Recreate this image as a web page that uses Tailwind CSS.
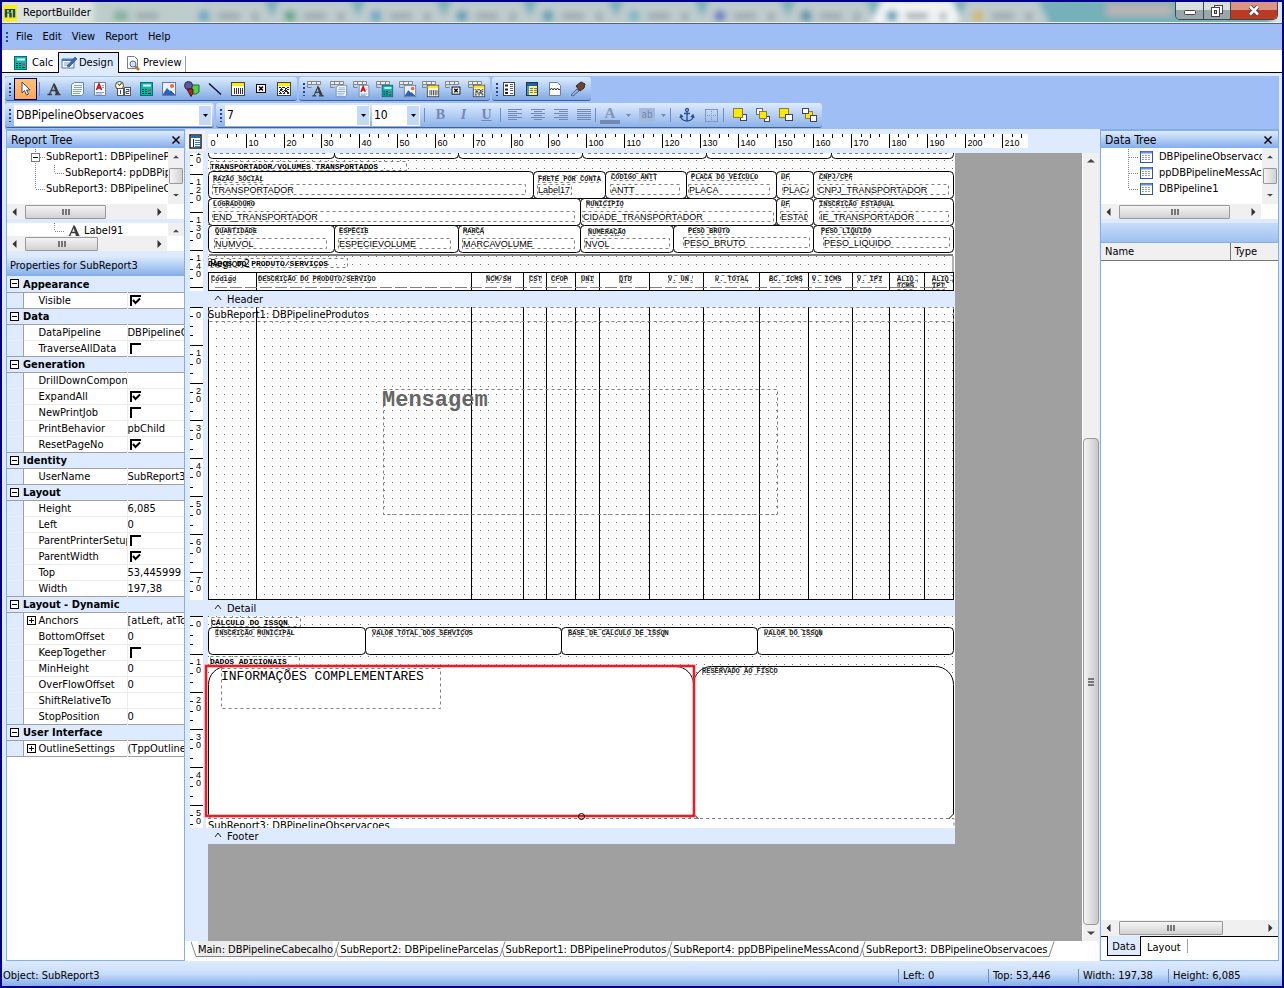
<!DOCTYPE html>
<html lang="pt-BR">
<head>
    <meta charset="UTF-8">
    <meta name="viewport" content="width=device-width, initial-scale=1.0">
    <title>ReportBuilder</title>
    <script src="https://cdn.jsdelivr.net/npm/@tailwindcss/browser@4"></script>
</head>
<body class="bg-[#00008b] font-['DejaVu_Sans_Condensed','Liberation_Sans',sans-serif] text-[11px] leading-4 text-black">
    <!-- Icon symbols -->
    <svg class="hidden" aria-hidden="true">
        <defs>
            <symbol id="i-cursor" viewBox="0 0 16 16"><path d="M4 1v11l2.500-2.500 2 4.500 2-1-2-4h3.500z" fill="#fff" stroke="#3a4a78"/></symbol>
            <symbol id="i-a" viewBox="0 0 16 16"><path d="M1.500 13.500h4.500M9 13.500h5.500M3.500 13L8 3l4.500 10M5.500 9.500h5" stroke="#3c3c3c" stroke-width="1.300" fill="none"/><path d="M7 3h2l4.500 10h-3.500z" fill="#3c3c3c"/></symbol>
            <symbol id="i-doc" viewBox="0 0 16 16"><path d="M5.500 1.500h9v11l-2 2h-10v-11z" fill="#fff" stroke="#6a84b8"/><path d="M5 4.500h8M5 6.500h8M4 8.500h9M4 10.500h8M4 12.500h7" stroke="#7aa4dc"/></symbol>
            <symbol id="i-rich" viewBox="0 0 16 16"><path d="M2.500 1.500h11v13h-11z" fill="#fff" stroke="#7383a8"/><path d="M4.500 9L7 3l2.500 6M5.500 7h3" stroke="#e00000" stroke-width="1.600" fill="none"/><path d="M10 4.500h2M10 6.500h2M4 11.500h8M4 13h6" stroke="#7a9cd0"/></symbol>
            <symbol id="i-clock" viewBox="0 0 16 16"><circle cx="4.500" cy="4.500" r="4" fill="#fff8d0" stroke="#444"/><path d="M3 2.500l1.500 2L6.500 2" stroke="#222" fill="none"/><rect x="2.500" y="7.500" width="6" height="7" fill="#fff" stroke="#555"/><rect x="9.500" y="6.500" width="6" height="8" fill="#fff" stroke="#555"/><path d="M5.500 9v4M11 8.500h3v2h-3v2h3" stroke="#1b4fa8" fill="none"/></symbol>
            <symbol id="i-calc" viewBox="0 0 16 16"><rect x="2.500" y="1.500" width="12" height="13" fill="#0fb5ae" stroke="#06706c"/><path d="M5 4.500h8" stroke="#e8ffff" stroke-width="2"/><path d="M4 8.500h2M7 8.500h2M4 10.500h2M7 10.500h2M4 12.500h2M7 12.500h2M10 12.500h3" stroke="#033"/><path d="M10 9.500h3" stroke="#d33" stroke-width="2"/></symbol>
            <symbol id="i-img" viewBox="0 0 16 16"><rect x="1.500" y="1.500" width="13" height="13" fill="#e8f2ff" stroke="#6a78a8"/><circle cx="11" cy="5" r="2" fill="#f06830"/><path d="M2 13l4-6 3 3 1-1 4 4v1H2z" fill="#2e62b8"/><path d="M8 7l6 6" stroke="#fff"/></symbol>
            <symbol id="i-shapes" viewBox="0 0 16 16"><path d="M7 4h8v7l-3 2H7z" fill="#4fd14a" stroke="#1a6d1a"/><circle cx="4.500" cy="4.500" r="4" fill="#5c55a8" stroke="#333"/><path d="M3 8h6v4l-2 3.500L5 12z" fill="#a52a2a" stroke="#501010"/></symbol>
            <symbol id="i-line" viewBox="0 0 16 16"><path d="M2 2.500l12 11" stroke="#101030" stroke-width="1.500"/></symbol>
            <symbol id="i-bar" viewBox="0 0 16 16"><rect x="1.500" y="1.500" width="13" height="13" fill="#fff" stroke="#444"/><path d="M2 3.500h12" stroke="#ffec00" stroke-width="3"/><path d="M4.500 7v6M6.500 7v6M8.500 7v6M10.500 7v6M12.500 7v6" stroke="#333"/></symbol>
            <symbol id="i-x" viewBox="0 0 16 16"><rect x="3.500" y="3.500" width="9" height="8" fill="#fff" stroke="#000"/><path d="M6 5.500l4 4M10 5.500l-4 4" stroke="#000" stroke-width="1.500"/></symbol>
            <symbol id="i-noise" viewBox="0 0 16 16"><rect x="1.500" y="1.500" width="13" height="13" fill="#fff" stroke="#444"/><path d="M2 3.500h12" stroke="#ffec00" stroke-width="3"/><path d="M3 6.500h2m1 0h3m2 0h2M4 8.500h3m2 0h1m1 0h2M3 10.500h1m2 0h2m1 0h3M3 12.500h3m1 0h2m2 0h2M5 7.500h1m3 0h2M4 9.500h2m2 0h3M4 11.500h1m3 0h1m2 0h2" stroke="#222"/></symbol>
            <symbol id="i-tab" viewBox="0 0 16 16"><path d="M.5 1.500h13v3H.5zM4.500 1.500v3M9.500 1.500v3" fill="#eee" stroke="#858585"/><path d="M.5 4.500v3h4" fill="none" stroke="#858585"/></symbol>
            <symbol id="i-list" viewBox="0 0 16 16"><rect x="2.500" y="1.500" width="11" height="13" fill="#fff" stroke="#444"/><path d="M4 4.500h3M4 8.500h3M4 12h3" stroke="#223" stroke-width="2"/><path d="M9 3.500h3M9 5.500h3M9 7.500h3M9 9.500h3M9 12.500h3" stroke="#567"/></symbol>
            <symbol id="i-grid" viewBox="0 0 16 16"><rect x="2.500" y="1.500" width="11" height="13" fill="#fff56a" stroke="#234"/><path d="M3 3.500h10" stroke="#1c5fb0" stroke-width="3"/><path d="M4 5v9" stroke="#4d8fe0" stroke-width="2"/><path d="M6 7.500h3M10 7.500h3M6 9.500h3M10 9.500h3M6 11.500h3M10 11.500h3" stroke="#777"/></symbol>
            <symbol id="i-page" viewBox="0 0 16 16"><path d="M2.500 1.500h8l3 3v10h-11z" fill="#fff" stroke="#6c7fa8"/><path d="M3 9l1.500-2L6 9l1.500-2L9 9l1.500-2L12 9l1-1" stroke="#333" fill="none"/></symbol>
            <symbol id="i-brush" viewBox="0 0 16 16"><path d="M1 14l6-6 2 2-6 5z" fill="#9db4dc" stroke="#49608c"/><path d="M6 5l5-4 4 2-1 4-4 3z" fill="#6d4530" stroke="#3b2318"/></symbol>
            <symbol id="i-pencil" viewBox="0 0 16 16"><path d="M1 4h12v9H1z" fill="#f4f8ff" stroke="#4d78b8"/><path d="M1 5h12" stroke="#4d78b8" stroke-width="2"/><path d="M3 8h5M3 10h4" stroke="#8ab"/><path d="M6 11l8-9 2 2-8 8z" fill="#3e6db5" stroke="#223a66" stroke-width=".6"/></symbol>
            <symbol id="i-preview" viewBox="0 0 16 16"><path d="M2.500 1.500h7l3 3v9h-10z" fill="#fff" stroke="#6c7fa8"/><circle cx="8" cy="9" r="3" fill="#cfe2ff" stroke="#667"/><path d="M10 11l4 4" stroke="#b07a30" stroke-width="2.500"/></symbol>
            <symbol id="i-anchor" viewBox="0 0 16 16"><circle cx="8" cy="3" r="1.500" fill="none" stroke="#2f4f8f" stroke-width="1.300"/><path d="M8 4.500V14M5 6.500h6M2 9c0 4 4 5 6 5s6-1 6-5M1 11l1-3 2 2M15 11l-1-3-2 2" fill="none" stroke="#2f4f8f" stroke-width="1.400"/></symbol>
            <symbol id="i-border" viewBox="0 0 16 16"><rect x="2.500" y="2.500" width="12" height="12" fill="none" stroke="#8295bb"/><path d="M8.500 4v9M4 8.500h9" stroke="#8295bb" stroke-dasharray="1 1"/></symbol>
            <symbol id="i-front" viewBox="0 0 16 16"><rect x="8.500" y="7.500" width="6" height="6" fill="#fff" stroke="#445"/><rect x="1.500" y="1.500" width="9" height="9" fill="#ffe800" stroke="#8a7d40"/></symbol>
            <symbol id="i-fwd" viewBox="0 0 16 16"><rect x="1.500" y="1.500" width="6" height="6" fill="#fff" stroke="#667"/><rect x="9.500" y="9.500" width="5" height="5" fill="#fff" stroke="#445"/><rect x="4.500" y="4.500" width="7" height="7" fill="#ffe800" stroke="#8a7d40"/></symbol>
            <symbol id="i-back" viewBox="0 0 16 16"><rect x="1.500" y="1.500" width="9" height="9" fill="#ffe800" stroke="#8a7d40"/><rect x="7.500" y="7.500" width="7" height="6" fill="#fff" stroke="#445"/></symbol>
            <symbol id="i-bwd" viewBox="0 0 16 16"><rect x="4.500" y="4.500" width="7" height="7" fill="#ffe800" stroke="#8a7d40"/><rect x="1.500" y="1.500" width="6" height="5" fill="#fff" stroke="#445"/><rect x="9.500" y="8.500" width="6" height="6" fill="#fff" stroke="#445"/></symbol>
            <symbol id="i-table" viewBox="0 0 13 12"><rect x=".5" y=".5" width="12" height="11" fill="#fff" stroke="#33559b"/><path d="M1 1.500h11" stroke="#6a8fd8" stroke-width="2"/><path d="M2 4.500h9M2 6.500h9M2 8.500h9" stroke="#8fa3c8" stroke-dasharray="2 1"/></symbol>
            <symbol id="a-left" viewBox="0 0 8 8"><path d="M5.500 0v8L1.500 4z" fill="#333"/></symbol>
            <symbol id="a-right" viewBox="0 0 8 8"><path d="M2.500 0v8L6.500 4z" fill="#333"/></symbol>
            <symbol id="a-up" viewBox="0 0 8 8"><path d="M0 5.500h8L4 2z" fill="#444"/></symbol>
            <symbol id="a-down" viewBox="0 0 8 8"><path d="M0 2.500h8L4 6z" fill="#444"/></symbol>
        </defs>
    </svg>

    <div class="flex h-screen flex-col border-2 border-[#00008b] bg-[#deebff]">
        <!-- Title bar -->
        <header class="relative flex h-[22px] shrink-0 items-center overflow-hidden border-b border-[#5a6468] bg-[#b9cccf]">
            <svg class="absolute inset-0 h-full w-full" viewBox="0 0 1280 21" preserveAspectRatio="none" aria-hidden="true">
                <defs><filter id="blur" x="-5%" y="-20%" width="110%" height="140%"><feGaussianBlur stdDeviation="3"/></filter></defs>
                <g id="glass" filter="url(#blur)"></g>
                <path d="M0 20.500h1280" stroke="#e6eeee"/>
            </svg>
            <svg class="relative ml-px h-4 w-[14px]" viewBox="0 0 14 16" aria-hidden="true">
                <rect width="14" height="16" fill="#ffef00"/>
                <path d="M3 4v8.500M7.500 8v4.500M7 4.500v3M11 4v8.500" fill="none" stroke="#0a4a8a" stroke-width="2.500"/>
                <path d="M2 4.500h6M3 8h5M8 4.500h3" fill="none" stroke="#0a4a8a"/>
            </svg>
            <h1 class="relative ml-1.5">ReportBuilder</h1>
            <div class="relative mr-1 ml-auto flex h-[18px] self-start overflow-hidden rounded-b-[5px] border border-t-0 border-[#40484c]">
                <button aria-label="Minimize" class="flex w-7 items-center justify-center border-r border-[#40484c] bg-linear-to-b from-[#d8dfe0] from-50% to-[#9aa7aa] to-50%">
                    <svg class="size-3" viewBox="0 0 12 12"><rect x=".5" y="5.500" width="11" height="4" rx="1" fill="#fff" stroke="#444"/></svg>
                </button>
                <button aria-label="Restore" class="flex w-[27px] items-center justify-center border-r border-[#40484c] bg-linear-to-b from-[#d8dfe0] from-50% to-[#9aa7aa] to-50%">
                    <svg class="size-3" viewBox="0 0 12 12"><rect x="3.500" y=".5" width="8" height="8" fill="#fff" stroke="#444"/><rect x=".5" y="2.500" width="8" height="9" fill="#fff" stroke="#444"/><rect x="3.500" y="5.500" width="2" height="3" fill="#bbb" stroke="#444"/></svg>
                </button>
                <button aria-label="Close" class="flex w-[46px] items-center justify-center bg-linear-to-b from-[#dd9484] from-45% to-[#bb3a22] to-50%">
                    <svg class="h-[11px] w-3" viewBox="0 0 12 11"><path d="M2 1.500l8 8M10 1.500l-8 8" stroke="#444" stroke-width="4.500"/><path d="M2 1.500l8 8M10 1.500l-8 8" stroke="#fff" stroke-width="2.500"/></svg>
                </button>
            </div>
        </header>

        <!-- Menu -->
        <nav class="flex h-[25px] shrink-0 items-center gap-2.5 bg-[#9ebef5] pl-1">
            <svg class="-mr-1 h-3 w-1" viewBox="0 0 4 12" aria-hidden="true"><path d="M1 1v12" stroke="#28408c" stroke-width="2" stroke-dasharray="2 2"/></svg>
            <a href="#">File</a><a href="#">Edit</a><a href="#">View</a><a href="#">Report</a><a href="#">Help</a>
        </nav>

        <!-- Workspace tabs -->
        <div class="flex h-6 shrink-0 border-t border-b border-t-[#b8b8b8] border-b-black bg-white">
            <button class="flex w-14 items-center gap-1 pt-1 pl-2.5"><svg class="size-4"><use href="#i-calc"/></svg>Calc</button>
            <button class="mt-0.5 -mb-px flex w-[61px] items-center gap-0.5 border border-b-0 border-black bg-[#deebff] pl-0.5"><svg class="size-4"><use href="#i-pencil"/></svg>Design</button>
            <button class="flex items-center gap-0.5 pt-1 pl-1.5"><svg class="size-4"><use href="#i-preview"/></svg>Preview</button>
            <i class="mt-1.5 ml-1 h-4 w-px bg-[#a0a0a0]"></i>
        </div>

        <!-- Toolbars -->
        <div class="mx-[3px] mt-[3px] flex h-[53px] shrink-0 flex-col gap-0.5 bg-[#9ebef5]">
            <div class="flex h-[25px] gap-0.5 pt-px" id="bars"></div>
            <div class="flex h-[25px] gap-0.5">
                <div class="flex w-[209px] items-center rounded-[3px] border-b border-[#3b619c] bg-linear-to-b from-[#ddecfe] to-[#8db2e8] pr-0.5 pl-1">
                    <svg class="mr-0.5 h-3.5 w-[3px]" viewBox="0 0 3 14" aria-hidden="true"><path d="M1 1v13" stroke="#28408c" stroke-width="2" stroke-dasharray="2 2"/></svg>
                    <div class="relative flex-1">
                        <select aria-label="Object" class="h-[21px] w-full appearance-none bg-white pl-0.5 text-[12px] outline-none"><option>DBPipelineObservacoes</option></select>
                        <span class="pointer-events-none absolute inset-y-px right-px flex w-3 items-center justify-center bg-[#c4daf8]"><svg class="h-[3px] w-[5px]" viewBox="0 0 5 3"><path d="M0 0h5L2.500 3z"/></svg></span>
                    </div>
                </div>
                <div class="flex items-center rounded-[3px] border-b border-[#3b619c] bg-linear-to-b from-[#ddecfe] to-[#8db2e8] pr-0.5 pl-1">
                    <svg class="mr-0.5 h-3.5 w-[3px]" viewBox="0 0 3 14" aria-hidden="true"><path d="M1 1v13" stroke="#28408c" stroke-width="2" stroke-dasharray="2 2"/></svg>
                    <div class="relative w-[145px]">
                        <select aria-label="Font" class="h-[21px] w-full appearance-none bg-white pl-0.5 text-[12px] outline-none"><option>7</option></select>
                        <span class="pointer-events-none absolute inset-y-px right-px flex w-3 items-center justify-center bg-[#c4daf8]"><svg class="h-[3px] w-[5px]" viewBox="0 0 5 3"><path d="M0 0h5L2.500 3z"/></svg></span>
                    </div>
                    <div class="relative ml-0.5 w-12">
                        <select aria-label="Font size" class="h-[21px] w-full appearance-none bg-white pl-0.5 text-[12px] outline-none"><option>10</option></select>
                        <span class="pointer-events-none absolute inset-y-px right-px flex w-3 items-center justify-center bg-[#c4daf8]"><svg class="h-[3px] w-[5px]" viewBox="0 0 5 3"><path d="M0 0h5L2.500 3z"/></svg></span>
                    </div>
                    <i class="mx-1 h-3.5 w-px bg-[#6a8ccb]"></i>
                    <button class="w-[23px] text-center font-['Liberation_Serif',serif] text-[14px] font-bold text-[#7388b3]">B</button>
                    <button class="w-[23px] text-center font-['Liberation_Serif',serif] text-[14px] font-bold text-[#7388b3] italic">I</button>
                    <button class="w-[23px] text-center font-['Liberation_Serif',serif] text-[14px] font-bold text-[#7388b3] underline">U</button>
                    <i class="mx-0.5 h-3.5 w-px bg-[#6a8ccb]"></i>
                    <button aria-label="Align left" class="flex w-[23px] justify-center"><svg class="h-3 w-3.5" viewBox="0 0 14 12"><path d="M0 .5h14M0 2.500h9M0 4.500h14M0 6.500h9M0 8.500h14M0 10.500h9" stroke="#7388b3"/></svg></button>
                    <button aria-label="Center" class="flex w-[23px] justify-center"><svg class="h-3 w-3.5" viewBox="0 0 14 12"><path d="M0 .5h14M3 2.500h8M0 4.500h14M3 6.500h8M0 8.500h14M3 10.500h8" stroke="#7388b3"/></svg></button>
                    <button aria-label="Align right" class="flex w-[23px] justify-center"><svg class="h-3 w-3.5" viewBox="0 0 14 12"><path d="M0 .5h14M5 2.500h9M0 4.500h14M5 6.500h9M0 8.500h14M5 10.500h9" stroke="#7388b3"/></svg></button>
                    <button aria-label="Justify" class="flex w-[23px] justify-center"><svg class="h-3 w-3.5" viewBox="0 0 14 12"><path d="M0 .5h14M0 2.500h14M0 4.500h14M0 6.500h14M0 8.500h14M0 10.500h14" stroke="#7388b3"/></svg></button>
                    <i class="mr-1 h-3.5 w-px bg-[#6a8ccb]"></i>
                    <button aria-label="Font color" class="flex h-[18px] w-5 flex-col items-center border-b-4 border-[#7388b3] font-['Liberation_Serif',serif] text-[15px] leading-[15px] font-bold text-[#8295bb]">A</button>
                    <svg class="ml-1.5 h-[3px] w-[5px]" viewBox="0 0 5 3"><path d="M0 0h5L2.500 3z" fill="#7388b3"/></svg>
                    <button aria-label="Highlight color" class="ml-2 h-[14px] w-4 bg-[#a5b9dc] text-[10px] leading-3 text-[#6f84b0]">ab</button>
                    <svg class="ml-1.5 h-[3px] w-[5px]" viewBox="0 0 5 3"><path d="M0 0h5L2.500 3z" fill="#7388b3"/></svg>
                    <i class="mx-1 h-3.5 w-px bg-[#6a8ccb]"></i>
                    <button aria-label="Anchors" class="flex w-6 justify-center"><svg class="size-4"><use href="#i-anchor"/></svg></button>
                    <button aria-label="Border" class="flex w-6 justify-center"><svg class="size-4"><use href="#i-border"/></svg></button>
                    <i class="mr-1 h-3.5 w-px bg-[#6a8ccb]"></i>
                    <button aria-label="Bring to front" class="flex w-[23px] justify-center"><svg class="size-4"><use href="#i-front"/></svg></button>
                    <button aria-label="Bring forward" class="flex w-[23px] justify-center"><svg class="size-4"><use href="#i-fwd"/></svg></button>
                    <button aria-label="Send to back" class="flex w-[23px] justify-center"><svg class="size-4"><use href="#i-back"/></svg></button>
                    <button aria-label="Send backward" class="flex w-[23px] justify-center"><svg class="size-4"><use href="#i-bwd"/></svg></button>
                </div>
            </div>
        </div>

        <!-- Main area -->
        <main class="mx-[3px] grid min-h-0 flex-1 grid-cols-[180px_1fr_180px] bg-[#deebff]">
            <!-- Report tree and properties -->
            <aside class="ml-px flex min-h-0 flex-col border border-t-2 border-[#84aee8] bg-white">
                <div class="flex h-[17px] shrink-0 items-center justify-between bg-linear-to-b from-[#deebff] to-[#84aee8] pr-1 pl-1">
                    <h2 class="text-[12px]">Report Tree</h2>
                    <button aria-label="Close report tree"><svg class="size-2" viewBox="0 0 8 8"><path d="M.5.5l7 7M7.500.5l-7 7" stroke="#000" stroke-width="1.500"/></svg></button>
                </div>
                <div class="flex h-[56px] shrink-0">
                    <ul class="min-w-0 flex-1 overflow-hidden pt-px whitespace-nowrap">
                        <li class="flex h-4 items-center"><svg class="mr-px h-4 w-[38px] shrink-0" viewBox="0 0 38 16"><path d="M28.500 0v16M33 8.500h5" stroke="#888" stroke-dasharray="1 1"/><rect x="24.500" y="4.500" width="8" height="8" fill="#fff" stroke="#777"/><path d="M26 8.500h5" stroke="#000"/></svg>SubReport1: DBPipelineProdutos</li>
                        <li class="flex h-4 items-center"><svg class="mr-px h-4 w-[57px] shrink-0" viewBox="0 0 57 16"><path d="M28.500 0v16M47.500 0v8M48 8.500h9" stroke="#888" stroke-dasharray="1 1"/></svg>SubReport4: ppDBPipelineMessAcond</li>
                        <li class="flex h-4 items-center"><svg class="mr-px h-4 w-[38px] shrink-0" viewBox="0 0 38 16"><path d="M28.500 0v8M29 8.500h9" stroke="#888" stroke-dasharray="1 1"/></svg>SubReport3: DBPipelineObservacoes</li>
                    </ul>
                    <div class="flex w-4 shrink-0 flex-col items-center justify-between bg-[#f0f0f0] py-1.5">
                        <svg class="size-1.5"><use href="#a-up"/></svg>
                        <span class="h-4 w-3.5 rounded-[1px] border border-[#999] bg-linear-to-r from-[#f4f4f4] to-[#d2d2d2]"></span>
                        <svg class="size-1.5"><use href="#a-down"/></svg>
                    </div>
                </div>
                <div class="flex h-[15px] w-[160px] shrink-0 items-center bg-[#f0f0f0] pl-1">
                    <svg class="size-2"><use href="#a-left"/></svg>
                    <span class="ml-1.5 flex h-[14px] w-[81px] items-center justify-center gap-px rounded-[1px] border border-[#999] bg-linear-to-b from-[#f4f4f4] to-[#d2d2d2]"><i class="h-1.5 w-0.5 bg-[#777]"></i><i class="h-1.5 w-0.5 bg-[#777]"></i><i class="h-1.5 w-0.5 bg-[#777]"></i></span>
                    <svg class="mr-1 ml-auto size-2"><use href="#a-right"/></svg>
                </div>
                <div class="h-1 shrink-0 bg-[#deebff]"></div>
                <div class="flex h-[13px] shrink-0 overflow-hidden">
                    <div class="flex h-4 flex-1 items-center"><svg class="h-4 w-[57px]" viewBox="0 0 57 16"><path d="M47.500 0v8M48 8.500h9" stroke="#888" stroke-dasharray="1 1"/></svg><svg class="mx-0.5 h-3.5 w-4" viewBox="0 2 16 12"><use href="#i-a" width="16" height="16"/></svg>Label91</div>
                    <div class="flex w-4 items-end justify-center bg-[#f0f0f0] pb-0.5"><svg class="size-1.5"><use href="#a-up"/></svg></div>
                </div>
                <div class="flex h-[15px] w-[160px] shrink-0 items-center bg-[#f0f0f0] pl-1">
                    <svg class="size-2"><use href="#a-left"/></svg>
                    <span class="ml-1.5 flex h-[14px] w-[73px] items-center justify-center gap-px rounded-[1px] border border-[#999] bg-linear-to-b from-[#f4f4f4] to-[#d2d2d2]"><i class="h-1.5 w-0.5 bg-[#777]"></i><i class="h-1.5 w-0.5 bg-[#777]"></i><i class="h-1.5 w-0.5 bg-[#777]"></i></span>
                    <svg class="mr-1 ml-auto size-2"><use href="#a-right"/></svg>
                </div>
                <div class="h-[5px] shrink-0 bg-[#deebff]"></div>
                <h2 class="flex h-5 shrink-0 items-center overflow-hidden bg-linear-to-b from-[#deebff] to-[#84aee8] pl-[3px] whitespace-nowrap">Properties for SubReport3</h2>
                <table class="w-full table-fixed border-collapse">
                    <colgroup><col class="w-4"><col class="w-[104px]"><col></colgroup>
                    <tbody id="props"></tbody>
                </table>
            </aside>

            <!-- Design surface -->
            <section class="flex min-h-0 min-w-0 flex-col">
                <div class="flex h-6 shrink-0 items-center">
                    <div class="ml-px flex h-5 w-5 shrink-0 items-center justify-center bg-[#f0f0f0]"><svg class="h-[15px] w-3.5" viewBox="0 0 14 15"><rect x="1" y="1" width="11" height="13" fill="#fff" stroke="#222" stroke-width="1.500"/><path d="M2 3h9" stroke="#2b6cb0" stroke-width="2"/><path d="M4.500 5v8" stroke="#222"/><path d="M6 6.500h5M6 8.500h5M6 10.500h5M6 12.500h5" stroke="#2b80d8"/></svg></div>
                    <svg id="hruler" class="ml-0.5 h-3.5 w-[820px]" viewBox="0 0 820 14" shape-rendering="crispEdges"><rect width="820" height="14" fill="#fff"/></svg>
                </div>
                <div class="flex min-h-0 flex-1">
                    <div class="flex w-[23px] shrink-0 flex-col gap-4 pl-[5px]">
                        <svg id="vr1" class="h-[138px] w-[13px] shrink-0" viewBox="0 0 13 138" shape-rendering="crispEdges"><rect width="13" height="138" fill="#fff"/></svg>
                        <svg id="vr2" class="h-[293px] w-[13px] shrink-0" viewBox="0 0 13 293" shape-rendering="crispEdges"><rect width="13" height="293" fill="#fff"/></svg>
                        <svg id="vr3" class="h-[212px] w-[13px] shrink-0" viewBox="0 0 13 212" shape-rendering="crispEdges"><rect width="13" height="212" fill="#fff"/></svg>
                    </div>
                    <div class="flex min-w-0 flex-1 flex-col bg-[#a0a0a0]">
                        <svg id="band-header" class="h-[138px] w-[747px] shrink-0" viewBox="0 0 747 138"></svg>
                        <button class="flex h-4 w-[747px] shrink-0 items-center gap-1 bg-[#deebff] pt-px pl-1.5"><svg class="mb-1 h-1.5 w-2" viewBox="0 0 8 6"><path d="M1 5l3-4 3 4" fill="none" stroke="#222"/></svg><span class="ml-px">Header</span></button>
                        <svg id="band-detail" class="h-[293px] w-[747px] shrink-0" viewBox="0 0 747 293"></svg>
                        <button class="flex h-4 w-[747px] shrink-0 items-center gap-1 bg-[#deebff] pt-px pl-1.5"><svg class="mb-1 h-1.5 w-2" viewBox="0 0 8 6"><path d="M1 5l3-4 3 4" fill="none" stroke="#222"/></svg><span class="ml-px">Detail</span></button>
                        <svg id="band-footer" class="h-[212px] w-[747px] shrink-0 overflow-visible" viewBox="0 0 747 212"></svg>
                        <button class="flex h-4 w-[747px] shrink-0 items-center gap-1 bg-[#deebff] pt-px pl-1.5"><svg class="mb-1 h-1.5 w-2" viewBox="0 0 8 6"><path d="M1 5l3-4 3 4" fill="none" stroke="#222"/></svg><span class="ml-px">Footer</span></button>
                    </div>
                    <div class="flex w-[17px] shrink-0 flex-col items-center border-l border-white bg-[#f0f0f0] py-1">
                        <svg class="size-2"><use href="#a-up"/></svg>
                        <div class="flex w-full flex-1 flex-col pt-[273px] pb-1">
                            <span class="flex flex-1 flex-col items-center justify-center gap-px rounded-sm border border-[#999] bg-linear-to-r from-[#f4f4f4] to-[#c8c8c8]"><i class="h-0.5 w-1.5 bg-[#777]"></i><i class="h-0.5 w-1.5 bg-[#777]"></i><i class="h-0.5 w-1.5 bg-[#777]"></i></span>
                        </div>
                        <svg class="size-2"><use href="#a-down"/></svg>
                    </div>
                </div>
                <nav class="flex h-5 shrink-0 items-start bg-white pl-1.5" id="reports"></nav>
            </section>

            <!-- Data tree -->
            <aside class="ml-px flex min-h-0 flex-col border border-t-2 border-[#84aee8] bg-white">
                <div class="flex h-[17px] shrink-0 items-center justify-between bg-linear-to-b from-[#deebff] to-[#84aee8] pr-1.5 pl-1">
                    <h2 class="text-[12px]">Data Tree</h2>
                    <button aria-label="Close data tree"><svg class="size-2" viewBox="0 0 8 8"><path d="M.5.5l7 7M7.500.5l-7 7" stroke="#000" stroke-width="1.500"/></svg></button>
                </div>
                <div class="flex h-[56px] shrink-0">
                    <ul class="min-w-0 flex-1 overflow-hidden pt-px whitespace-nowrap">
                        <li class="flex h-4 items-center"><svg class="mr-px h-4 w-[38px] shrink-0" viewBox="0 0 38 16"><path d="M27.500 0v16M28 8.500h10" stroke="#888" stroke-dasharray="1 1"/></svg><svg class="mr-1.5 h-3 w-[13px] shrink-0"><use href="#i-table"/></svg>DBPipelineObservacoes</li>
                        <li class="flex h-4 items-center"><svg class="mr-px h-4 w-[38px] shrink-0" viewBox="0 0 38 16"><path d="M27.500 0v16M28 8.500h10" stroke="#888" stroke-dasharray="1 1"/></svg><svg class="mr-1.5 h-3 w-[13px] shrink-0"><use href="#i-table"/></svg>ppDBPipelineMessAcond</li>
                        <li class="flex h-4 items-center"><svg class="mr-px h-4 w-[38px] shrink-0" viewBox="0 0 38 16"><path d="M27.500 0v8M28 8.500h10" stroke="#888" stroke-dasharray="1 1"/></svg><svg class="mr-1.5 h-3 w-[13px] shrink-0"><use href="#i-table"/></svg>DBPipeline1</li>
                    </ul>
                    <div class="flex w-4 shrink-0 flex-col items-center justify-between bg-[#f0f0f0] py-1.5">
                        <svg class="size-1.5"><use href="#a-up"/></svg>
                        <span class="h-4 w-3.5 rounded-[1px] border border-[#999] bg-linear-to-r from-[#f4f4f4] to-[#d2d2d2]"></span>
                        <svg class="size-1.5"><use href="#a-down"/></svg>
                    </div>
                </div>
                <div class="flex h-[15px] w-[160px] shrink-0 items-center bg-[#f0f0f0] pl-1">
                    <svg class="size-2"><use href="#a-left"/></svg>
                    <span class="ml-1.5 flex h-[14px] w-[111px] items-center justify-center gap-px rounded-[1px] border border-[#999] bg-linear-to-b from-[#f4f4f4] to-[#d2d2d2]"><i class="h-1.5 w-0.5 bg-[#777]"></i><i class="h-1.5 w-0.5 bg-[#777]"></i><i class="h-1.5 w-0.5 bg-[#777]"></i></span>
                    <svg class="mr-1 ml-auto size-2"><use href="#a-right"/></svg>
                </div>
                <div class="h-1 shrink-0 bg-[#deebff]"></div>
                <div class="h-5 shrink-0 border-b border-[#84aee8] bg-linear-to-b from-[#c6dcfa] to-[#9fc0f0]"></div>
                <table class="w-full table-fixed border-collapse bg-[#f0f0f0] text-left">
                    <thead><tr class="h-[17px] border-b border-[#777]"><th class="w-[129px] border-r border-[#777] p-0 pt-px pl-1 font-normal">Name</th><th class="p-0 pt-px pl-1 font-normal">Type</th></tr></thead>
                </table>
                <div class="flex-1"></div>
                <div class="flex h-4 shrink-0 items-center bg-[#f0f0f0] pl-1">
                    <svg class="size-2"><use href="#a-left"/></svg>
                    <span class="ml-1.5 flex h-[14px] w-[104px] items-center justify-center gap-px rounded-[1px] border border-[#999] bg-linear-to-b from-[#f4f4f4] to-[#d2d2d2]"><i class="h-1.5 w-0.5 bg-[#777]"></i><i class="h-1.5 w-0.5 bg-[#777]"></i><i class="h-1.5 w-0.5 bg-[#777]"></i></span>
                    <svg class="mr-1 ml-auto size-2"><use href="#a-right"/></svg>
                </div>
                <div class="flex h-6 shrink-0 items-start border-t border-black pl-1.5">
                    <button class="-mt-px h-5 w-[34px] border border-t-0 border-black bg-[#deebff] pt-0.5">Data</button>
                    <button class="h-5 px-1.5 pt-px">Layout</button>
                    <i class="mt-0.5 h-3.5 w-px bg-[#a0a0a0]"></i>
                </div>
            </aside>
        </main>

        <!-- Status bar -->
        <footer class="flex h-[25px] shrink-0 items-center bg-linear-to-b from-[#deebff] via-[#c9defa] to-[#84aee8] pt-1 pl-px">
            <span class="flex-1">Object: SubReport3</span>
            <span class="w-[90px] border-l border-[#6a8ccb] pl-1 leading-[14px]">Left: 0</span>
            <span class="w-[90px] border-l border-[#6a8ccb] pl-1 leading-[14px]">Top: 53,446</span>
            <span class="w-[90px] border-l border-[#6a8ccb] pl-1 leading-[14px]">Width: 197,38</span>
            <span class="w-[114px] border-l border-[#6a8ccb] pl-1 leading-[14px]">Height: 6,085</span>
        </footer>
    </div>

    <script>
const NS = 'http://www.w3.org/2000/svg';
const MM = 3.783; // pixels per millimetre

function add(parent, tag, attrs, text) {
    const el = document.createElementNS(NS, tag);
    for (const k in attrs) el.setAttribute(k, attrs[k]);
    if (text !== undefined) el.textContent = text;
    parent.appendChild(el);
    return el;
}

// Glass title bar
const glass = document.getElementById('glass');
add(glass, 'rect', { x: 200, y: -4, width: 1090, height: 30, fill: '#76b0b8' });
add(glass, 'rect', { x: -10, y: -4, width: 110, height: 30, fill: '#dce2e0' });
add(glass, 'rect', { x: 92, y: -4, width: 100, height: 30, fill: '#bccdca' });
['#6aa6c0', '#58a582', '#6aa6c0', '#5f9fb4', '#5f9fb4', '#7ab6c4', '#6a7cc0', '#5a92a4', '#5f9fb4', '#d0b868'].forEach((c, i) => {
    const x = 188 + i * 86;
    add(glass, 'path', { d: `M${x - 8} 24L${x + 4} -2H${x + 74}L${x + 86} 24z`, fill: i === 8 ? '#f2f4f4' : '#bfcccd' });
    add(glass, 'circle', { cx: x + 14, cy: 14, r: 6, fill: c });
    add(glass, 'rect', { x: x + 28, y: 11, width: 22, height: 6, fill: '#98a4a6' });
    add(glass, 'rect', { x: x + 62, y: 11, width: 6, height: 7, fill: '#8f9b9e' });
});
add(glass, 'rect', { x: 112, y: 9, width: 14, height: 10, fill: '#7fb096' });
add(glass, 'rect', { x: 134, y: 11, width: 22, height: 6, fill: '#98a4a6' });
add(glass, 'rect', { x: 1104, y: 2, width: 66, height: 12, fill: '#b9b4b4' });
add(glass, 'rect', { x: 1270, y: -4, width: 30, height: 30, fill: '#dce6e6' });

// Component toolbars
const bars = [
    ['cursor', '|', 'a', 'doc', 'rich', 'clock', 'calc', 'img', 'shapes', 'line', 'bar', 'x', 'noise'],
    ['+a', '+doc', '+rich', '+calc', '+img', '+bar', '+x', '+noise'],
    ['list', 'grid', 'page', 'brush']
];
document.getElementById('bars').innerHTML = bars.map((bar, b) => `
    <div class="flex items-center rounded-[3px] border-b border-[#3b619c] bg-linear-to-b from-[#ddecfe] to-[#81a9e2] pr-0.5 pl-1">
        <svg class="${b ? '-mr-0.5 h-3.5 w-[3px]' : 'mr-0.5 h-3.5 w-[3px]'}" viewBox="0 0 3 14"><path d="M1 1v13" stroke="#28408c" stroke-width="2" stroke-dasharray="2 2"/></svg>
        ${bar.map(n => {
            if (n === '|') return '<i class="mx-0.5 h-3.5 w-px bg-[#6a8ccb]"></i>';
            if (n === 'cursor') return '<button aria-label="Select" class="flex h-[22px] w-[23px] items-center justify-center border border-[#000080] bg-linear-to-b from-[#fdc27a] to-[#fca84f]"><svg class="size-4"><use href="#i-cursor"/></svg></button>';
            if (n[0] === '+') return `<button aria-label="DB ${n.slice(1)}" class="flex w-[23px] justify-center"><svg class="size-[18px]" viewBox="0 0 18 18"><use href="#i-tab" width="16" height="16"/><use href="#i-${n.slice(1)}" x="4" y="4" width="14" height="14"/></svg></button>`;
            return `<button aria-label="${n}" class="flex w-[23px] justify-center"><svg class="size-4"><use href="#i-${n}"/></svg></button>`;
        }).join('')}
    </div>`).join('');

// Property inspector: strings are values, booleans are tick boxes
const props = [
    ['Appearance', [['Visible', true]]],
    ['Data', [['DataPipeline', 'DBPipelineObservacoes'], ['TraverseAllData', false]]],
    ['Generation', [['DrillDownComponent', ''], ['ExpandAll', true], ['NewPrintJob', false], ['PrintBehavior', 'pbChild'], ['ResetPageNo', true]]],
    ['Identity', [['UserName', 'SubReport3']]],
    ['Layout', [['Height', '6,085'], ['Left', '0'], ['ParentPrinterSetup', false], ['ParentWidth', true], ['Top', '53,445999'], ['Width', '197,38']]],
    ['Layout - Dynamic', [['+Anchors', '[atLeft, atTop]'], ['BottomOffset', '0'], ['KeepTogether', false], ['MinHeight', '0'], ['OverFlowOffset', '0'], ['ShiftRelativeTo', ''], ['StopPosition', '0']]],
    ['User Interface', [['+OutlineSettings', '(TppOutlineSettings)']]]
];
const box = plus => `<svg class="size-[9px] shrink-0" viewBox="0 0 9 9"><rect x=".5" y=".5" width="8" height="8" fill="#fff" stroke="#000"/><path d="M2 4.500h5${plus ? 'M4.500 2v5' : ''}" stroke="#000"/></svg>`;
document.getElementById('props').innerHTML = props.map(([group, rows]) => `
    <tr class="h-4 border-b border-[#a0a0a0] bg-[#deebff]"><th colspan="3" class="p-0 text-left font-bold"><div class="flex h-[15px] items-center gap-1 pl-[3px]">${box(false)}<span class="pt-0.5">${group}</span></div></th></tr>
    ${rows.map(([name, value], i) => {
        const id = name.replace('+', '');
        const line = i === rows.length - 1 ? 'h-4 border-b border-[#a0a0a0]' : 'h-4 border-b border-[#ececec]';
        const cell = typeof value === 'string' ? `<span class="pt-0.5">${value}</span>`
            : `<span class="relative ml-0.5 block h-[11px] w-[11px] border-t-2 border-l-2 border-black"><input id="${id}" type="checkbox" ${value ? 'checked' : ''} class="peer absolute inset-0 appearance-none"><svg class="pointer-events-none absolute inset-0 hidden size-[9px] peer-checked:block" viewBox="0 0 9 9"><path d="M1 3l2.500 3L8 1.500" fill="none" stroke="#000" stroke-width="2"/></svg></span>`;
        return `<tr class="${line}"><td class="border-r border-[#a0a0a0] bg-[#deebff] p-0"></td>
            <td class="overflow-hidden border-r border-[#ececec] p-0"><label for="${id}" class="flex h-[15px] items-center whitespace-nowrap ${name[0] === '+' ? 'gap-[3px] pl-[3px]' : 'pl-[15px]'}">${name[0] === '+' ? box(true) : ''}<span class="pt-0.5">${id}</span></label></td>
            <td class="overflow-hidden p-0 whitespace-nowrap"><div class="flex h-[15px] items-center">${cell}</div></td></tr>`;
    }).join('')}`).join('');

// Sub-report tabs
const reports = ['Main: DBPipelineCabecalho', 'SubReport2: DBPipelineParcelas', 'SubReport1: DBPipelineProdutos', 'SubReport4: ppDBPipelineMessAcond', 'SubReport3: DBPipelineObservacoes'];
document.getElementById('reports').innerHTML = reports.map((r, i) => `
    <svg class="h-4 w-[7px] shrink-0" viewBox="0 0 7 16"><path d="${i ? 'M3 7l2 8.500h2' : 'M0 .5l5 15h2'}" fill="none" stroke="#888"/></svg>
    <button class="${i ? 'h-4 border-b border-[#888] pt-px leading-[15px] whitespace-nowrap' : 'h-4 border-b border-[#888] bg-[#ececec] pt-px leading-[15px] whitespace-nowrap'}">${r}</button>
    <svg class="-mr-[7px] h-4 w-[7px] shrink-0" viewBox="0 0 7 16"><path d="M0 15.500h1L6 .5" fill="none" stroke="#888"/></svg>`).join('');

// Rulers: long tick each 10 mm, short ones each 2.5 mm
const small = { 'font-family': 'Liberation Sans, sans-serif', 'font-size': 9, fill: '#000' };
const hr = document.getElementById('hruler');
for (let q = 0; q * 2.5 <= 216; q++) {
    const x = Math.round(q * 2.5 * MM) + .5;
    const len = q % 4 === 0 ? 14 : q % 2 ? 3 : 4;
    if (q) add(hr, 'path', { d: `M${x} 0v${len}`, stroke: '#000' });
    if (q % 4 === 0) add(hr, 'text', { ...small, x: x + 2, y: 12 }, q * 2.5);
}
function vruler(id, from, height) {
    const svg = document.getElementById(id);
    for (let q = 0; q < 80; q++) {
        const y = Math.round(q * 2.5 * MM - from) + .5;
        if (y > height) break;
        if (y > 0) add(svg, 'path', { d: `M0 ${y}h${q % 4 ? 3 : 13}`, stroke: '#000' });
        if (q % 4 === 0) String(q * 2.5).split('').forEach((d, i) => add(svg, 'text', { ...small, x: 6, y: y + 10 + i * 8 }, d));
    }
}
vruler('vr1', 433, 138);
vruler('vr2', 0, 293);
vruler('vr3', 0, 212);

// Bands
const mono = 'Liberation Mono, monospace';
function page(svg, h, off) {
    add(svg, 'rect', { width: 747, height: h, fill: '#fff' });
    for (let y = off; y < h; y += 8) add(svg, 'path', { d: `M0 ${y + .5}H747`, stroke: '#777', 'stroke-dasharray': '1 7' });
}
function shape(svg, x, y, w, h, r) {
    add(svg, 'rect', { x: x + .5, y: y + .5, width: w, height: h, rx: r, fill: '#fff', stroke: '#000' });
}
function dashed(svg, x, y, w, h) {
    add(svg, 'rect', { x: x + .5, y: y + .5, width: w, height: h, fill: 'none', stroke: '#808080', 'stroke-dasharray': '3 3' });
}
// caption in tiny monospaced type
function cap(svg, x, y, s) {
    dashed(svg, x, y, s.length * 4, 7);
    add(svg, 'text', { x, y: y + 6, 'font-family': mono, 'font-size': 7, 'font-weight': 'bold', fill: '#222' }, s);
}
// data field, its text is cut at the right edge of the box
function field(svg, x, y, w, s) {
    dashed(svg, x, y, w, 10);
    const view = add(svg, 'svg', { x, y, width: w, height: 13 });
    add(view, 'text', { x: 1, y: 9, 'font-family': 'Liberation Sans, sans-serif', 'font-size': 9 }, s);
}
function heading(svg, x, y, w, s) {
    dashed(svg, x, y, w, 9);
    add(svg, 'text', { x, y: y + 8, 'font-family': mono, 'font-size': 8, 'font-weight': 'bold' }, s);
}

const header = document.getElementById('band-header');
page(header, 138, 7);
[[0, 126], [126, 250], [250, 374], [374, 498], [498, 623], [623, 745]].forEach(([a, b]) => {
    shape(header, a, -20, b - a, 25, 4);
    add(header, 'path', { d: `M${a + 6} .5H${b - 6}`, stroke: '#808080', 'stroke-dasharray': '3 3' });
});
heading(header, 2, 8, 196, 'TRANSPORTADOR/VOLUMES TRANSPORTADOS');
[[18, [0, 325, 397, 478, 568, 605, 745]], [45, [0, 372, 568, 605, 745]], [72, [0, 126, 250, 372, 465, 605, 745]]].forEach(([y, xs]) => {
    for (let i = 1; i < xs.length; i++) shape(header, xs[i - 1], y, xs[i] - xs[i - 1], 27, 4);
});
[[5, 22, 'RAZÃO SOCIAL'], [330, 22, 'FRETE POR CONTA'], [403, 20, 'CÓDIGO ANTT'], [483, 20, 'PLACA DO VEÍCULO'], [573, 20, 'UF'], [611, 20, 'CNPJ/CPF'],
 [5, 47, 'LOGRADOURO'], [378, 47, 'MUNICÍPIO'], [573, 47, 'UF'], [611, 47, 'INSCRIÇÃO ESTADUAL'],
 [7, 74, 'QUANTIDADE'], [131, 74, 'ESPÉCIE'], [255, 74, 'MARCA'], [380, 75, 'NUMERAÇÃO'], [480, 74, 'PESO BRUTO'], [613, 74, 'PESO LÍQUIDO']
].forEach(c => cap(header, ...c));
[[4, 31, 313, 'TRANSPORTADOR'], [329, 31, 34, 'Label17'], [402, 31, 69, 'ANTT'], [480, 31, 81, 'PLACA'], [574, 31, 26, 'PLACA'], [609, 31, 131, 'CNPJ_TRANSPORTADOR'],
 [4, 58, 362, 'END_TRANSPORTADOR'], [374, 58, 191, 'CIDADE_TRANSPORTADOR'], [572, 58, 27, 'ESTADO'], [611, 58, 129, 'IE_TRANSPORTADOR'],
 [6, 85, 112, 'NUMVOL'], [130, 85, 112, 'ESPECIEVOLUME'], [254, 85, 112, 'MARCAVOLUME'], [376, 85, 85, 'NVOL'], [475, 84, 126, 'PESO_BRUTO'], [615, 84, 126, 'PESO_LIQUIDO']
].forEach(f => field(header, ...f));
add(header, 'rect', { x: 1, y: 101, width: 744, height: 2, fill: '#808080' });
add(header, 'rect', { x: 744, y: 103, width: 2, height: 16, fill: '#b0b0b0' });
heading(header, 0, 105, 139, 'DADOS DO PRODUTO/SERVIÇOS');
add(header, 'text', { x: 2, y: 114, 'font-size': 11 }, 'Region2');
const cols = [0, 48, 263, 315, 338, 367, 391, 441, 495, 551, 600, 644, 681, 716, 745];
cols.slice(1).forEach((c, i) => shape(header, cols[i], 119, c - cols[i], 18, 0));
[[3, 122, 'Código'], [50, 122, 'DESCRIÇÃO DO PRODUTO/SERVIÇO'], [278, 122, 'NCM/SH'], [321, 122, 'CST'], [343, 122, 'CFOP'], [373, 122, 'UNI'], [411, 122, 'QTD'], [460, 122, 'V. UN.'], [507, 122, 'V. TOTAL'], [561, 122, 'BC. ICMS'], [604, 122, 'V. ICMS'], [649, 122, 'V. IPI'], [689, 122, 'ALIQ.'], [689, 129, 'ICMS'], [724, 122, 'ALIQ.'], [724, 129, 'IPI']
].forEach(c => cap(header, ...c));
add(header, 'path', { d: 'M7 134.500H740', stroke: '#808080', 'stroke-dasharray': '12 3' });

const detail = document.getElementById('band-detail');
page(detail, 293, 7);
cols.forEach(c => add(detail, 'path', { d: `M${c + .5} 0V293`, stroke: '#000' }));
add(detail, 'path', { d: 'M0 292.500H746', stroke: '#000' });
dashed(detail, 0, 0, 745, 14);
add(detail, 'text', { x: 0, y: 11, 'font-size': 11 }, 'SubReport1: DBPipelineProdutos');
dashed(detail, 175, 82, 394, 125);
add(detail, 'text', { x: 174, y: 99, 'font-family': mono, 'font-size': 22, 'font-weight': 'bold', fill: '#666' }, 'Mensagem');

const footer = document.getElementById('band-footer');
page(footer, 212, 0);
add(footer, 'rect', { x: 0, y: 58, width: 747, height: 154, fill: '#fff' });
heading(footer, 3, 1, 89, 'CÁLCULO DO ISSQN');
heading(footer, 2, 40, 89, 'DADOS ADICIONAIS');
[[0, 157], [157, 353], [353, 549], [549, 745]].forEach(([a, b]) => shape(footer, a, 11, b - a, 27, 4));
[[7, 13, 'INSCRIÇÃO MUNICIPAL'], [164, 13, 'VALOR TOTAL DOS SERVIÇOS'], [360, 13, 'BASE DE CÁLCULO DE ISSQN'], [556, 13, 'VALOR DO ISSQN']].forEach(c => cap(footer, ...c));
shape(footer, 0, 50, 485, 160, 18);
shape(footer, 485, 50, 260, 160, 18);
add(footer, 'rect', { x: -2, y: 192, width: 749, height: 20, fill: '#fff' });
[[0, 2], [485, 480], [485, 490], [745, 740]].forEach(([a, b]) => add(footer, 'path', { d: `M${a + .5} 190v8L${b + .5} 203`, fill: 'none', stroke: '#000' }));
cap(footer, 494, 51, 'RESERVADO AO FISCO');
dashed(footer, 13, 52, 219, 40);
add(footer, 'text', { x: 13, y: 64, 'font-family': mono, 'font-size': 13 }, 'INFORMAÇÕES COMPLEMENTARES');
add(footer, 'path', { d: 'M0 202.500H746V212', fill: 'none', stroke: '#808080', 'stroke-dasharray': '3 3' });
// the band ends in the middle of this caption
const clip = add(footer, 'svg', { x: 0, y: 200, width: 300, height: 12 });
add(clip, 'text', { x: 0, y: 13, 'font-size': 11 }, 'SubReport3: DBPipelineObservacoes');
add(footer, 'rect', { x: -2, y: 50, width: 488, height: 150, fill: 'none', stroke: '#ff7474', 'stroke-width': 3 });
add(footer, 'rect', { x: -2, y: 50, width: 488, height: 150, fill: 'none', stroke: '#e00010', 'stroke-width': 1.5 });
add(footer, 'circle', { cx: 373.5, cy: 200.5, r: 3, fill: 'none', stroke: '#000' });
    </script>
</body>
</html>
